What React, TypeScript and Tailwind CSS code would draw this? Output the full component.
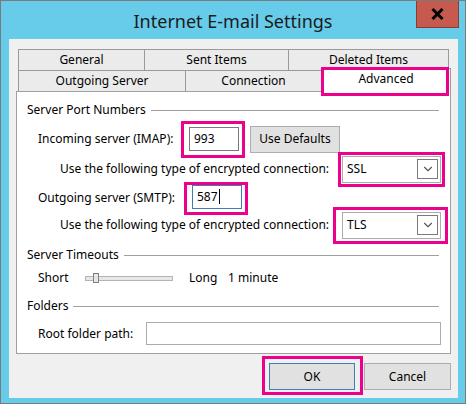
import { ChevronDown } from 'lucide-react';

const pink = 'border-[3px] border-[#ec008c]';

function Tab({ label, w, first }: { label: string; w: string; first?: boolean }) {
  return (
    <div
      className={`${w} h-[21px] ${first ? '' : '-ml-px'} border-t border-l border-r border-[#9a9a9a] bg-[#ebebeb] flex items-center justify-center`}
    >
      {label}
    </div>
  );
}

function GroupHeader({ title, mt }: { title: string; mt: string }) {
  return (
    <div className={`${mt} h-[20px] flex items-center pl-[10px] pr-[11px]`}>
      <span>{title}</span>
      <div className="flex-1 h-px bg-[#a0a0a0] ml-[5px]" />
    </div>
  );
}

function Combo({ value }: { value: string }) {
  return (
    <div className="w-[99px] h-[27px] bg-white border border-[#acacac] flex items-center pl-[4px] pr-[2px]">
      <span className="flex-1">{value}</span>
      <div className="w-[21px] h-[20px] border border-[#7a7a7a] flex items-center justify-center">
        <ChevronDown size={14} strokeWidth={2} className="text-[#5a5a5a]" />
      </div>
    </div>
  );
}

export default function App() {
  return (
    <div className="w-[466px] h-[404px] bg-[#67cbea] border border-[#7b7b7b] flex flex-col font-['Noto_Sans',sans-serif] text-[12px] leading-none text-black">
      {/* title bar */}
      <div className="h-[38px] flex shrink-0">
        <div className="w-[49px]" />
        <div className="flex-1 text-center text-[18px] pt-[11px] text-[#1b1b1b]">Internet E-mail Settings</div>
        <div className="w-[43px] h-[27px] mr-[6px] bg-[#c65a4f] border border-[#8a3b33] border-t-0 flex items-center justify-center">
          <svg width="13" height="12" viewBox="0 0 13 12">
            <path d="M1.5 1 L11.5 11 M11.5 1 L1.5 11" stroke="#000" strokeWidth="3" />
          </svg>
        </div>
      </div>

      {/* client area */}
      <div className="ml-[8px] mr-[7px] h-[359px] bg-[#f0f0f0] flex flex-col pt-[10px]">
        {/* tabs */}
        <div className="ml-[9px] flex flex-col">
          <div className="flex">
            <Tab label="General" w="w-[127px]" first />
            <Tab label="Sent Items" w="w-[145px]" />
            <Tab label="Deleted Items" w="w-[161px]" />
          </div>
          <div className="flex">
            <Tab label="Outgoing Server" w="w-[168px]" first />
            <Tab label="Connection" w="w-[137px]" />
            <div className="relative z-10 w-[130px] h-[24px] -mt-[2px] -mb-[1px] -ml-px border-t border-l border-r border-[#9a9a9a] bg-white flex items-center justify-center pb-[3px]">
              Advanced
              <div className={`absolute left-[-1px] top-[-2px] w-[128px] h-[29px] ${pink}`} />
            </div>
          </div>
        </div>

        {/* tab page */}
        <div className="ml-[7px] w-[435px] h-[263px] bg-white border border-[#a0a0a0] pt-[8px] flex flex-col">
          <GroupHeader title="Server Port Numbers" mt="mt-0" />

          <div className="mt-[4px] h-[30px] flex items-center pl-[21px]">
            <span className="w-[143px]">Incoming server (IMAP):</span>
            <div className={`${pink} pt-[3px] pb-[4px] pl-[5px] pr-[3px]`}>
              <div className="w-[50px] h-[24px] border border-[#7a7a7a] flex items-center pl-[4px]">993</div>
            </div>
            <div className="ml-[5px] w-[90px] h-[27px] bg-[#e1e1e1] border border-[#adadad] flex items-center justify-center">
              Use Defaults
            </div>
          </div>

          <div className="h-[30px] flex items-center pl-[43px] pr-[5px]">
            <span>Use the following type of encrypted connection:</span>
            <div className={`ml-auto ${pink} p-[1px]`}>
              <Combo value="SSL" />
            </div>
          </div>

          <div className="h-[28px] flex items-center pl-[21px]">
            <span className="w-[146px]">Outgoing server (SMTP):</span>
            <div className={`${pink} pt-0 pb-[3px] pl-[5px] pr-[3px]`}>
              <div className="w-[50px] h-[24px] border border-[#3c7fb1] flex items-center pl-[4px]">
                587<span className="w-px h-[15px] bg-black ml-px" />
              </div>
            </div>
          </div>

          <div className="h-[26px] flex items-center pl-[43px] pr-[2px]">
            <span>Use the following type of encrypted connection:</span>
            <div className={`ml-auto ${pink} pt-[2px] pb-[2px] pl-[6px] pr-[4px]`}>
              <Combo value="TLS" />
            </div>
          </div>

          <GroupHeader title="Server Timeouts" mt="mt-[7px]" />

          <div className="mt-[3px] h-[20px] flex items-center pl-[21px]">
            <span className="w-[47px]">Short</span>
            <div className="relative w-[88px] h-[5px] bg-[#e7e7e7] border border-[#b4b4b4]">
              <div className="absolute left-[7px] top-[-4px] w-[6px] h-[10px] bg-[#e6e6e6] border border-[#808080]" />
            </div>
            <span className="ml-[16px] w-[39px]">Long</span>
            <span>1 minute</span>
          </div>

          <GroupHeader title="Folders" mt="mt-[8px]" />

          <div className="mt-[6px] h-[23px] flex items-center pl-[21px]">
            <span className="w-[108px]">Root folder path:</span>
            <div className="w-[295px] h-[23px] border border-[#ababab]" />
          </div>
        </div>

        {/* dialog buttons */}
        <div className="mt-[2px] flex justify-end items-start pr-[7px]">
          <div className={`${pink} pt-[4px] pb-[2px] pl-[4px] pr-[5px]`}>
            <div className="w-[86px] h-[27px] bg-[#e1e1e1] border border-[#3c7fb1] flex items-center justify-center">OK</div>
          </div>
          <div className="ml-[1px] mt-[7px] w-[87px] h-[27px] bg-[#e1e1e1] border border-[#adadad] flex items-center justify-center">
            Cancel
          </div>
        </div>
      </div>
    </div>
  );
}
